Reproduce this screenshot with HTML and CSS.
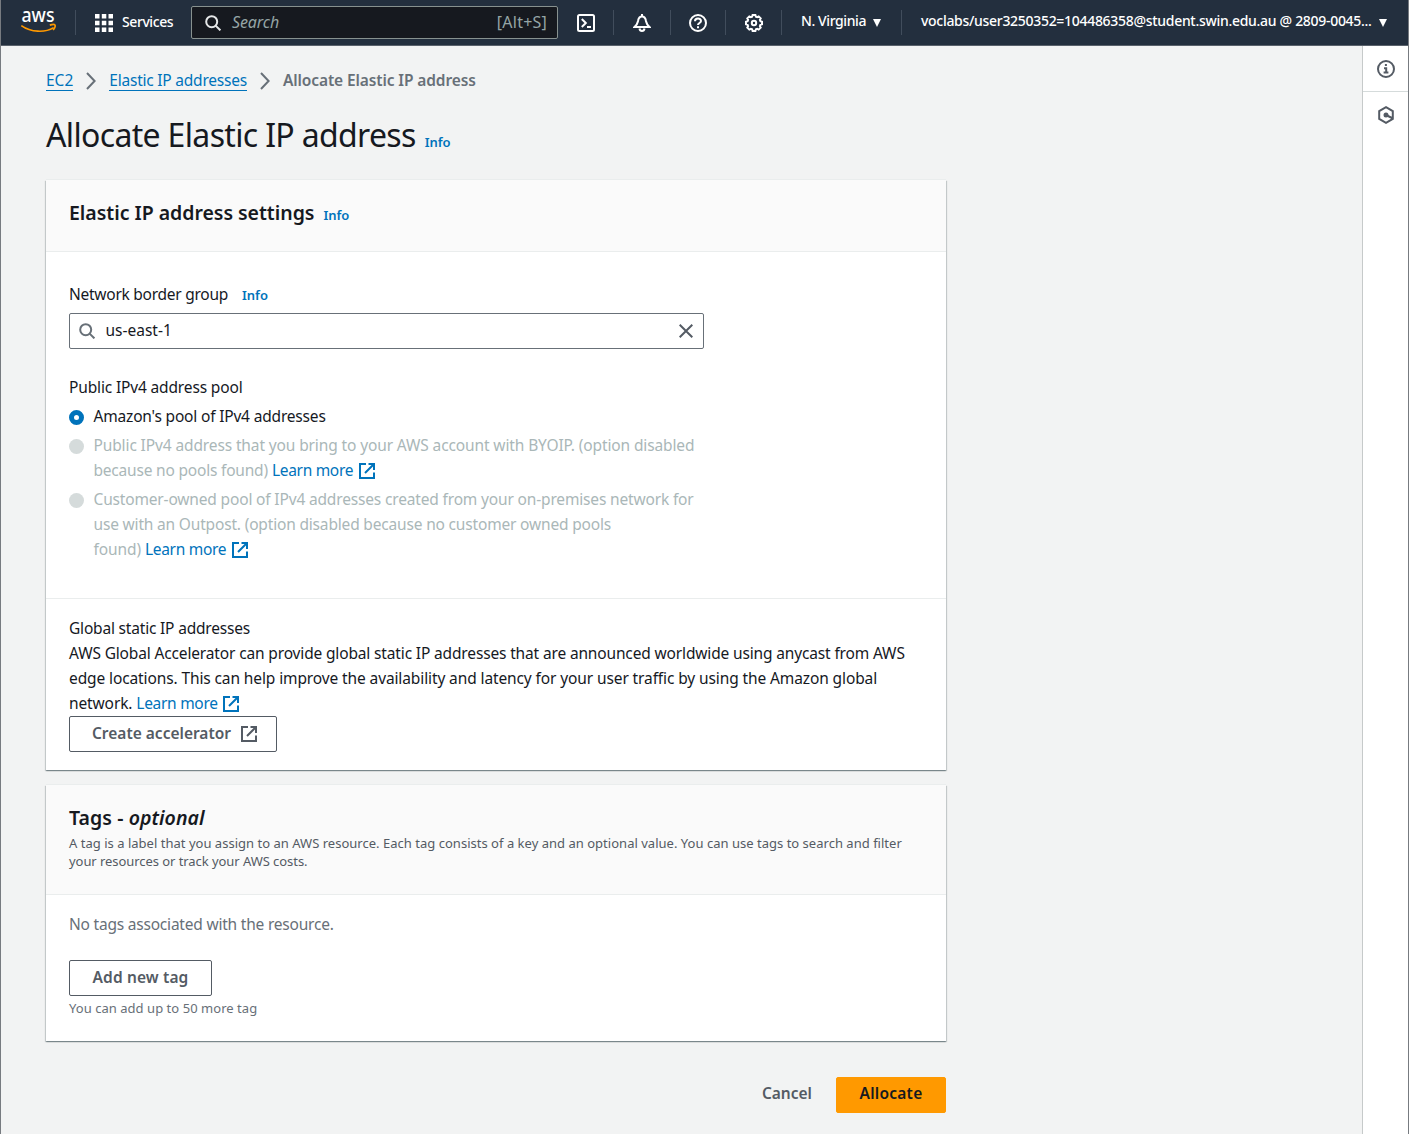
FILE: index.html
```
<!DOCTYPE html>
<html lang="en">
<head>
<meta charset="utf-8">
<title>Allocate Elastic IP address</title>
<link rel="stylesheet" href="styles.css">
</head>
<body>
<svg class="defs" width="0" height="0">
  <symbol id="search" viewBox="0 0 16 16"><circle cx="6.7" cy="6.7" r="5.500"/><path d="M10.600 10.600 15.400 15.400"/></symbol>
  <symbol id="external" viewBox="0 0 16 16"><path d="M7 1H1v14h14V9.500M9.500 1H15v6M14.500 1.500 6 10"/></symbol>
  <symbol id="chevron" viewBox="0 0 10 18"><path d="M1 1l7.600 8L1 17"/></symbol>
</svg>
<div class="window">
<header class="topnav">
  <a class="logo"><svg width="36" height="24" viewBox="0 0 36 24">
    <text x="0.500" y="12" textLength="33" lengthAdjust="spacingAndGlyphs">aws</text>
    <path class="smile" d="M.3 15.600C10 22.500 24 23 32.600 17.600"/><path class="smile" d="M28.800 15.100c2-.6 4.600-.8 5.100-.1s-.3 3.200-1.800 5"/>
  </svg></a>
  <div class="services"><svg width="18" height="18" viewBox="0 0 18 18"><path d="M0 0h4.500v4.500H0zM6.800 0h4.500v4.500H6.800zM13.500 0H18v4.500h-4.500zM0 6.800h4.500v4.500H0zM6.800 6.800h4.500v4.500H6.800zM13.500 6.800H18v4.500h-4.500zM0 13.500h4.500V18H0zM6.800 13.500h4.500V18H6.800zM13.500 13.500H18V18h-4.500z"/></svg><span class="t-services">Services</span></div>
  <div class="navsearch"><svg class="ico" width="16" height="16"><use href="#search"/></svg><i class="t-search">Search</i><span class="t-alt">[Alt+S]</span></div>
  <div class="navicon i1"><svg class="ico" width="18" height="18" viewBox="0 0 18 18"><rect x="1" y="1" width="16" height="16" rx="1.500"/><path d="M4.800 5l4 4-4 4M10 13h4"/></svg></div>
  <div class="navicon i2"><svg class="ico" width="18" height="18" viewBox="0 0 18 18"><path d="M9 0v2M1.500 13h15C13.500 10.500 13.500 9.500 13 7 12.500 4 11 2.500 9 2.500S5.500 4 5 7c-.5 2.500-.5 3.500-3.500 6zM6.500 14.500C7 17.800 11 17.800 11.500 14.500"/></svg></div>
  <div class="navicon i3"><svg class="ico" width="18" height="18" viewBox="0 0 18 18"><circle cx="9" cy="9" r="8"/><path d="M6 7.200C6 3.600 12 3.600 12 7c0 2-3 2-3 4M9 12.200v2"/></svg></div>
  <div class="navicon i4"><svg class="ico" width="18" height="18" viewBox="0 0 18 18"><path d="M7.600 1h2.800l.5 1.700 1.300.5 1.500-.8 2 2-.8 1.500.5 1.300 1.600.5v2.600l-1.600.5-.5 1.300.8 1.500-2 2-1.500-.8-1.300.5-.5 1.700H7.600l-.5-1.700-1.300-.5-1.500.8-2-2 .8-1.500-.5-1.300L1 10.300V7.700l1.600-.5.5-1.300-.8-1.500 2-2 1.500.8 1.300-.5z"/><circle cx="9" cy="9" r="2.200"/></svg></div>
  <div class="region"><span class="t-region">N. Virginia</span><i class="caret"></i></div>
  <div class="account"><span class="t-account">voclabs/user3250352=104486358@student.swin.edu.au @ 2809-0045...</span><i class="caret"></i></div>
</header>
<div class="shell">
<main>
  <nav class="crumbs"><a class="t-c1">EC2</a><svg class="ico" width="10" height="18"><use href="#chevron"/></svg><a class="t-c2">Elastic IP addresses</a><svg class="ico" width="10" height="18"><use href="#chevron"/></svg><b class="t-c3">Allocate Elastic IP address</b></nav>
  <div class="title"><h1>Allocate Elastic IP address</h1><a class="info">Info</a></div>

  <section class="card">
    <div class="cardhead"><h2 class="t-h2a">Elastic IP address settings</h2><a class="info">Info</a></div>
    <div class="settings">
      <div class="label"><span class="t-nbg">Network border group</span><a class="info">Info</a></div>
      <div class="field"><svg class="ico" width="16" height="16"><use href="#search"/></svg><span class="t-us">us-east-1</span><svg class="ico close" width="14" height="14" viewBox="0 0 14 14"><path d="M.7.7l12.600 12.600M13.300.7.7 13.300"/></svg></div>
      <div class="label pool"><span class="t-pool">Public IPv4 address pool</span></div>
      <div class="option"><i class="radio on"></i><div><span class="t-o1">Amazon's pool of IPv4 addresses</span></div></div>
      <div class="option off"><i class="radio"></i><div><span class="t-o2">Public IPv4 address that you bring to your AWS account with BYOIP. (option disabled</span><br><span class="t-o3">because no pools found)</span><a class="learn">Learn more</a><svg class="ico ext" width="16" height="16"><use href="#external"/></svg></div></div>
      <div class="option off"><i class="radio"></i><div><span class="t-o4">Customer-owned pool of IPv4 addresses created from your on-premises network for</span><br><span class="t-o5">use with an Outpost. (option disabled because no customer owned pools</span><br><span class="t-o6">found)</span><a class="learn">Learn more</a><svg class="ico ext" width="16" height="16"><use href="#external"/></svg></div></div>
    </div>
    <div class="global">
      <div><span class="t-g0">Global static IP addresses</span><br><span class="t-g1">AWS Global Accelerator can provide global static IP addresses that are announced worldwide using anycast from AWS</span><br><span class="t-g2">edge locations. This can help improve the availability and latency for your user traffic by using the Amazon global</span><br><span class="t-g3">network.</span><a class="learn">Learn more</a><svg class="ico ext" width="16" height="16"><use href="#external"/></svg></div>
      <button class="btn accel"><span class="t-b1">Create accelerator</span><svg class="ico" width="16" height="16"><use href="#external"/></svg></button>
    </div>
  </section>

  <section class="card tags">
    <div class="cardhead tagshead"><h2 class="t-h2b">Tags - <em>optional</em></h2>
      <p><span class="t-d1">A tag is a label that you assign to an AWS resource. Each tag consists of a key and an optional value. You can use tags to search and filter</span><br><span class="t-d2">your resources or track your AWS costs.</span></p></div>
    <div class="tagsbody">
      <div class="none"><span class="t-none">No tags associated with the resource.</span></div>
      <button class="btn add"><span class="t-b2">Add new tag</span></button>
      <div class="hint"><span class="t-hint">You can add up to 50 more tag</span></div>
    </div>
  </section>
  <div class="actions"><a class="cancel">Cancel</a><button class="btn primary"><span class="t-b3">Allocate</span></button></div>
</main>
<aside>
  <div class="tool"><svg class="ico" width="18" height="18" viewBox="0 0 18 18"><circle cx="9" cy="9" r="8"/><path d="M8.900 4v2M7 8.300h2.200v4.200M6.600 12.600h4.800"/></svg></div>
  <div class="tool"><svg class="ico" width="18" height="18" viewBox="0 0 18 18"><path d="M9 1.200l6.800 3.900v7.800L9 16.800l-6.800-3.900V5.100zM9 9l6 3"/><circle class="dot" cx="9" cy="9" r="2.500"/></svg></div>
</aside>
</div>
</div>
</body>
</html>
```
FILE: styles.css
```
* { box-sizing: border-box; }
body { margin: 0; font: 15.5px/25px "Noto Sans", sans-serif; color: #16191f; background: #f2f3f3; white-space: nowrap; }
.defs { position: absolute; }
.window { height: 1134px; border-left: 1px solid #777b80; border-right: 1px solid #777b80; display: flex; flex-direction: column; overflow: hidden; }
.ico { fill: none; stroke: currentColor; stroke-width: 2; flex: none; }
h1, h2, p { margin: 0; font-weight: 400; }
a { color: #0073bb; }

/* Top navigation */
.topnav { height: 46px; flex: none; background: #232f3e; border-bottom: 1px solid #59616b; color: #fff; display: flex; align-items: center; font-size: 14px; }
.logo { width: 75px; height: 25px; border-right: 1px solid #414d5c; padding-left: 20px; margin-bottom: 1px; }
.logo svg { display: block; overflow: visible; }
.logo text { font: 500 19px "Noto Sans", sans-serif; fill: #fff; }
.smile { fill: none; stroke: #ff9900; stroke-width: 1.7; }
.services { width: 115px; padding-left: 19px; display: flex; align-items: center; gap: 9px; font-weight: 500; }
.services svg { fill: #fff; }
.t-services { letter-spacing: -.42px; padding-bottom: 2px; }
.navsearch { width: 367px; height: 33px; border: 1px solid #87918f; border-radius: 2px; background: #16191f; display: flex; align-items: center; padding: 0 10px 0 13px; font-size: 16px; color: #95a5a6; }
.navsearch .ico { color: #e5e7e8; margin-right: 11px; }
.t-search { letter-spacing: -.1px; }
.t-alt { margin-left: auto; letter-spacing: .22px; }
.navicon { height: 25px; border-right: 1px solid #414d5c; display: flex; align-items: center; }
.i1 { width: 56px; padding-left: 19px; }
.i2 { width: 57px; padding-left: 19px; }
.i3 { width: 55px; padding-left: 18px; }
.i4 { width: 56px; padding-left: 19px; }
.region, .account { height: 25px; display: flex; align-items: center; font-weight: 500; line-height: 20px; }
.region span, .account span { padding-bottom: 4px; }
.region { width: 120px; padding-left: 19px; border-right: 1px solid #414d5c; }
.account { padding-left: 19px; }
.t-region { letter-spacing: -.4px; }
.t-account { letter-spacing: -.3px; }
.caret { border: 4.5px solid transparent; border-top: 8px solid #fff; border-bottom: 0; margin: 0 0 0 7px; }

.shell { flex: 1; display: flex; }
main { flex: 1; padding: 22px 0 0 45px; }
aside { width: 46px; background: #fff; border-left: 1px solid #c6caca; }
.tool { height: 46px; display: flex; align-items: center; justify-content: center; color: #545b64; }
.tool:first-child { border-bottom: 1px solid #d5dbdb; }
.tool .dot { fill: currentColor; stroke: none; }

/* Breadcrumbs and title */
.crumbs { height: 25px; display: flex; align-items: center; color: #687078; }
.crumbs a { border-bottom: 1px solid #0073bb; line-height: 20px; }
.crumbs .ico { margin: 1px 13px 0 13px; }
.crumbs b { font-weight: 600; }
.t-c2 { letter-spacing: -.22px; }
.t-c3 { letter-spacing: -.11px; }
.title { height: 87px; padding-top: 21px; display: flex; align-items: baseline; }
h1 { font-size: 32px; line-height: 42px; letter-spacing: -.66px; }
.info { font-size: 13px; font-weight: 600; }
.title .info, .cardhead .info { margin-left: 9px; }

/* Cards */
.card { width: 900px; background: #fff; box-shadow: 0 -1px 0 0 #eaeded, 0 1px 1px 0 rgba(0,28,36,.3), 1px 1px 1px 0 rgba(0,28,36,.15), -1px 1px 1px 0 rgba(0,28,36,.15); }
.cardhead { height: 72px; background: #fafafa; border-bottom: 1px solid #eaeded; padding: 20px 23px; }
h2 { display: inline; font-size: 19.5px; font-weight: 600; }
.t-h2a { letter-spacing: -.03px; }
.t-h2b { letter-spacing: .07px; }
.settings { height: 347px; padding: 30px 23px 0; border-bottom: 1px solid #eaeded; }
.label { height: 25px; }
.label .info { margin-left: 14px; }
.t-nbg { letter-spacing: -.26px; }
.t-pool { letter-spacing: -.15px; }
.field { width: 635px; height: 36px; margin: 6px 0 26px; border: 1px solid #687078; border-radius: 2px; display: flex; align-items: center; padding: 0 10px 0 9px; color: #16191f; }
.field .ico { color: #687078; margin-right: 10.5px; }
.t-us { padding-bottom: 1px; }
.field .close { color: #545b64; margin: 0 0 0 auto; }
.option { display: flex; margin-top: 4px; }
.option.off { color: #aab7b8; }
.radio { flex: none; width: 15px; height: 15px; border-radius: 50%; background: #d5dbdb; margin: 6px 9.5px 0 0; }
.radio.on { background: #fff; border: 5px solid #0073bb; }
.t-o1 { letter-spacing: -.18px; }
.t-o2 { letter-spacing: -.122px; }
.t-o3 { letter-spacing: -.2px; }
.t-o4 { letter-spacing: -.162px; }
.t-o5 { letter-spacing: -.175px; }
.t-o6 { letter-spacing: -.1px; }
.t-g0 { letter-spacing: -.19px; }
.t-g1 { letter-spacing: -.15px; }
.t-g2 { letter-spacing: -.113px; }
.t-g3 { letter-spacing: -.12px; }
.learn { margin-left: 4px; letter-spacing: -.3px; }
.ext { color: #0073bb; vertical-align: -3px; margin-left: 5.5px; }
.global { height: 171px; padding: 17px 23px 0; }

/* Buttons */
.btn { display: flex; align-items: center; justify-content: center; height: 36px; padding: 0 0 2px; border: 1px solid #545b64; border-radius: 2px; background: #fff; color: #545b64; font: 600 15.5px "Noto Sans", sans-serif; }
.accel { width: 208px; gap: 9.5px; padding-left: 2.5px; }
.accel .ico { position: relative; top: 1px; }

/* Tags */
.tags { margin-top: 15px; }
.tagshead { height: 110px; padding-top: 19px; }
.tagshead h2 { display: block; line-height: 27px; }
.tagshead p { font-size: 13px; line-height: 18px; color: #545b64; margin-top: 3px; }
.t-d1 { letter-spacing: .018px; }
.t-d2 { letter-spacing: -.06px; }
.tagsbody { height: 146px; padding: 17px 23px 0; color: #687078; }
.t-none { letter-spacing: -.21px; }
.add { width: 143px; margin: 23px 0 3px; }
.t-b2 { letter-spacing: .13px; }
.hint { font-size: 13px; line-height: 19px; letter-spacing: .04px; }
.actions { width: 900px; margin-top: 36px; display: flex; align-items: center; justify-content: flex-end; gap: 24px; }
.cancel { color: #545b64; font-weight: 600; padding-bottom: 4px; }
.primary { width: 110px; background: #ff9900; border-color: #ff9900; color: #16191f; padding-bottom: 4px; letter-spacing: .25px; }
```
